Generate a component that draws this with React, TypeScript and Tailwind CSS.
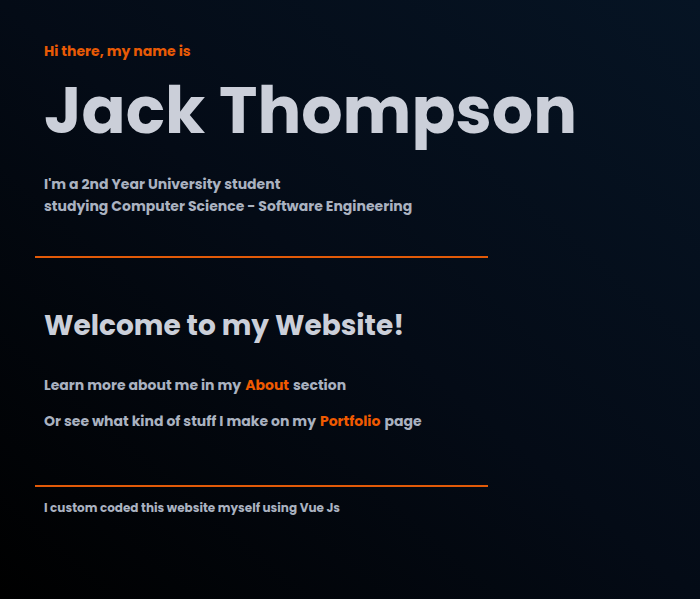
import type { ReactNode } from "react";

function SectionLink({ href, children }: { href: string; children: ReactNode }) {
  return (
    <a href={href} className="px-px text-[#f05a00] hover:underline">
      {children}
    </a>
  );
}

function Divider() {
  return <hr className="-ml-[9px] w-full max-w-[453px] border-0 border-t-2 border-[#e25a08]" />;
}

export default function App() {
  return (
    <main className="min-h-screen bg-[linear-gradient(to_top_right,#000000,#040b16_50%,#061424)] px-11 pt-10 font-['Poppins','Inter',sans-serif] text-sm font-bold text-[#aab2c0]">
      <header>
        <p className="leading-[22px] text-[#e85a05]">Hi there, my name is</p>
        <h1 className="mt-1 text-[65px] leading-[90px] font-bold whitespace-nowrap text-[#cbcfd9]">
          Jack Thompson
        </h1>
        <p className="mt-[17px] mb-[39px] leading-[22px]">
          I'm a 2nd Year University student
          <br />
          studying Computer Science - Software Engineering
        </p>
      </header>
      <Divider />
      <section className="pt-[46px] pb-[53px]">
        <h2 className="text-[28px] leading-[44px] font-bold text-[#cbcfd9]">
          Welcome to my Website!
        </h2>
        <p className="mt-[26px] leading-[22px]">
          Learn more about me in my <SectionLink href="#about">About</SectionLink> section
        </p>
        <p className="mt-[14px] leading-[22px]">
          Or see what kind of stuff I make on my{" "}
          <SectionLink href="#portfolio">Portfolio</SectionLink> page
        </p>
      </section>
      <Divider />
      <footer className="pt-[11px] text-xs leading-5">
        I custom coded this website myself using Vue Js
      </footer>
    </main>
  );
}
